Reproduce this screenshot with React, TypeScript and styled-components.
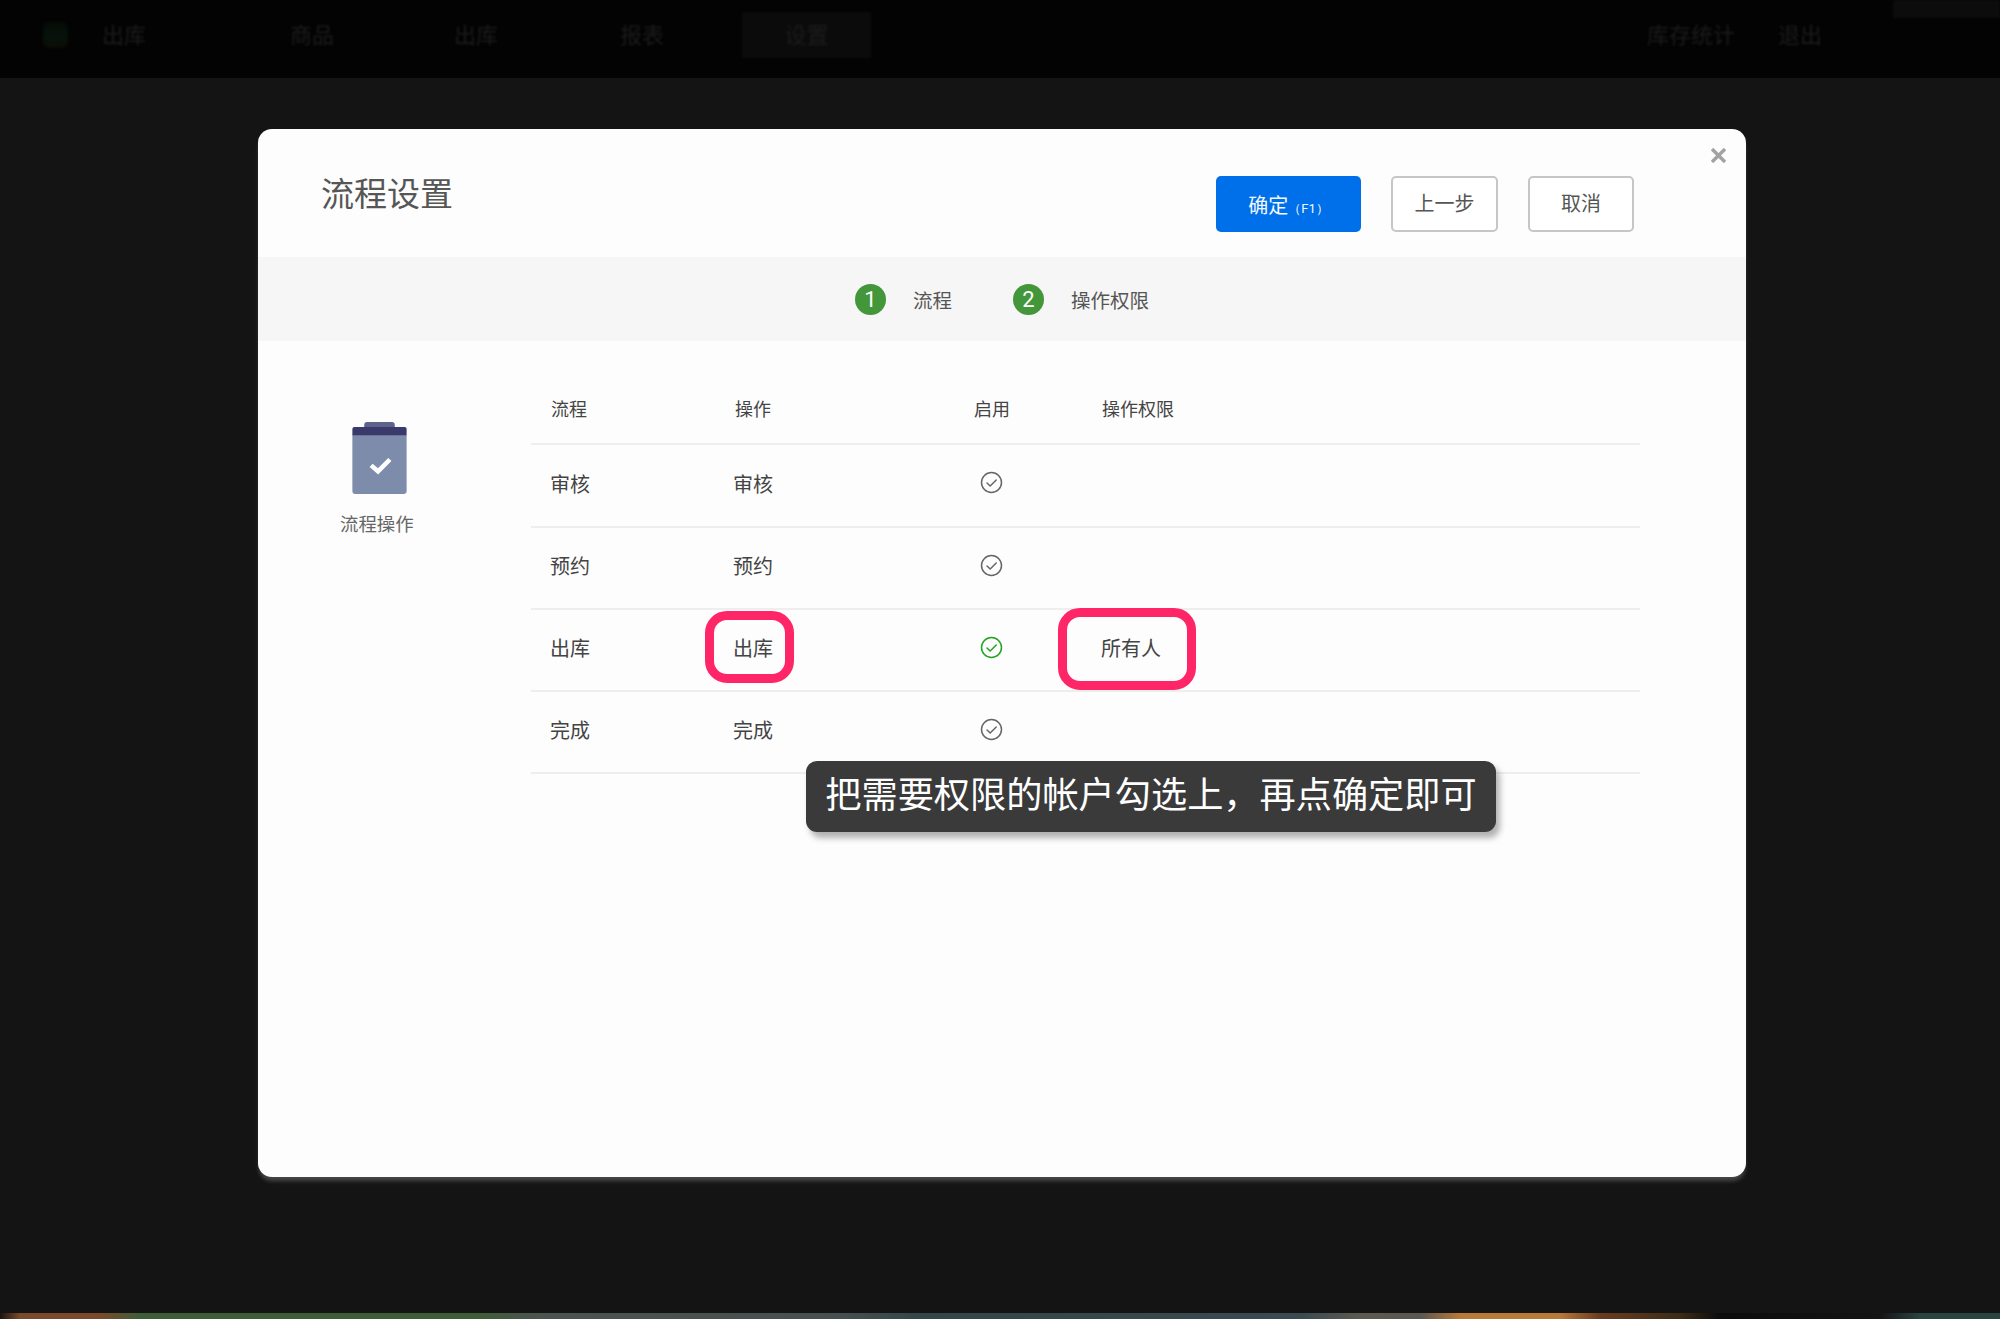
import React from "react";
import styled, { createGlobalStyle } from "styled-components";

const Global = createGlobalStyle`
  html, body { margin: 0; padding: 0; background: #141414; }
  body { font-family: "Noto Sans CJK SC", "Noto Sans", sans-serif; }
`;

const Page = styled.div`
  width: 2000px;
  height: 1319px;
  display: flex;
  flex-direction: column;
  overflow: hidden;
  background: #141414;
`;

const TopBar = styled.header`
  position: relative;
  height: 78px;
  flex: none;
  background: #030303;
  display: flex;
  align-items: center;
  padding-left: 43px;
  color: #1c1c1c;
  font-size: 22px;
`;

const Logo = styled.div`
  width: 25px;
  height: 26px;
  margin-right: 34px;
  margin-top: -9px;
  border-radius: 6px;
  background: linear-gradient(180deg, #040b06, #07130a 60%, #0b0b03);
  filter: blur(1.5px);
`;

const NavItem = styled.span<{ $w: number; $active?: boolean }>`
  width: ${(p) => p.$w}px;
  height: 46px;
  margin-top: -9px;
  padding-bottom: 3px;
  box-sizing: border-box;
  flex: none;
  display: flex;
  align-items: center;
  filter: blur(1px);
  justify-content: ${(p) => (p.$active ? "center" : "flex-start")};
  background: ${(p) => (p.$active ? "#0b0b0b" : "transparent")};
`;

const Spacer = styled.div`
  flex: 1;
`;

const Badge = styled.div`
  position: absolute;
  right: 0;
  top: 0;
  width: 107px;
  height: 18px;
  background: #0c0c0c;
  filter: blur(1px);
`;

const Main = styled.main`
  flex: 1;
  padding: 51px 254px 0 258px;
`;

const Modal = styled.section`
  position: relative;
  height: 1048px;
  border-radius: 14px;
  background: #fdfdfd;
  box-shadow: 0 5px 4px -1px rgba(255, 255, 255, 0.22);
  color: #444;
`;

const Header = styled.div`
  height: 128px;
  display: flex;
  align-items: flex-start;
  padding: 47px 112px 0 63px;
  box-sizing: border-box;
`;

const Title = styled.h1`
  margin: -8px 0 0;
  font-size: 33px;
  line-height: 48px;
  font-weight: 400;
  color: #565656;
`;

const Actions = styled.div`
  margin-left: auto;
  display: flex;
  gap: 30px;
`;

const Button = styled.button<{ $w: number; $primary?: boolean }>`
  width: ${(p) => p.$w}px;
  height: 56px;
  padding: ${(p) => (p.$primary ? "0" : "0 0 3px")};
  box-sizing: border-box;
  border-radius: 5px;
  font-family: inherit;
  font-size: 20px;
  border: ${(p) => (p.$primary ? "none" : "2px solid #c6c6c6")};
  background: ${(p) => (p.$primary ? "#0070ea" : "#ffffff")};
  color: ${(p) => (p.$primary ? "#f4f9ff" : "#555555")};
`;

const Hint = styled.span`
  font-size: 13px;
  font-family: Roboto, sans-serif;
`;

const Close = styled.svg`
  position: absolute;
  right: 20px;
  top: 19px;
  width: 15px;
  height: 15px;
`;

const Steps = styled.div`
  height: 84px;
  background: #f6f6f6;
  display: flex;
  align-items: center;
  justify-content: center;
`;

const StepDot = styled.span`
  width: 31px;
  height: 31px;
  border-radius: 50%;
  background: #43963a;
  color: #fff;
  font-family: Roboto, sans-serif;
  font-size: 22px;
  font-weight: 400;
  display: flex;
  align-items: center;
  justify-content: center;
  margin-right: 27px;
`;

const StepLabel = styled.span<{ $gap?: number }>`
  font-size: 19.5px;
  color: #555;
  margin-right: ${(p) => p.$gap ?? 0}px;
`;

const Body = styled.div`
  display: flex;
  padding: 32px 106px 0 0;
`;

const Side = styled.div`
  width: 273px;
  flex: none;
  display: flex;
  flex-direction: column;
  padding: 49px 0 0 82px;
  box-sizing: border-box;
`;

const SideIcon = styled.svg`
  width: 55px;
  height: 72px;
  margin-left: 12px;
`;

const SideLabel = styled.div`
  margin-top: 16px;
  font-size: 18.4px;
  line-height: 26px;
  color: #666;
`;

const Table = styled.div`
  flex: 1;
`;

const Row = styled.div<{ $head?: boolean }>`
  display: grid;
  grid-template-columns: 184px 237px 80px 1fr;
  align-items: center;
  box-sizing: border-box;
  height: ${(p) => (p.$head ? 72 : 82)}px;
  padding-bottom: ${(p) => (p.$head ? 1 : 4)}px;
  border-bottom: 2px solid #eeeeee;
  font-size: ${(p) => (p.$head ? 18 : 20)}px;
  color: #444;
  &:nth-child(2) {
    height: 83px;
  }
`;

const Cell = styled.div<{ $center?: boolean; $indent?: number }>`
  padding-left: ${(p) => p.$indent ?? 19}px;
  text-align: ${(p) => (p.$center ? "center" : "left")};
  line-height: 28px;
  display: ${(p) => (p.$center ? "flex" : "block")};
  justify-content: center;
`;

const HeadCell = styled(Cell)`
  padding-left: ${(p) => p.$indent ?? 20}px;
`;

const CheckIcon = styled.svg<{ $on?: boolean }>`
  width: 23px;
  height: 23px;
  margin-top: -2px;
  margin-left: -1px;
  color: ${(p) => (p.$on ? "#1fa51f" : "#666666")};
`;

const Highlight = styled.div<{ $l: number; $t: number; $w: number; $h: number }>`
  position: absolute;
  left: ${(p) => p.$l}px;
  top: ${(p) => p.$t}px;
  width: ${(p) => p.$w}px;
  height: ${(p) => p.$h}px;
  box-sizing: border-box;
  border: 9px solid #ff2667;
  border-radius: 22px;
`;

const Caption = styled.div`
  position: absolute;
  left: 548px;
  top: 632px;
  width: 690px;
  height: 71px;
  padding-bottom: 10px;
  box-sizing: border-box;
  border-radius: 11px;
  background: #3a3a3a;
  box-shadow: 4px 6px 6px rgba(0, 0, 0, 0.3);
  color: #fff;
  font-size: 36.2px;
  display: flex;
  align-items: center;
  justify-content: center;
  white-space: nowrap;
`;

const Strip = styled.div`
  height: 6px;
  flex: none;
  background: linear-gradient(
    90deg,
    #1a1410 0,
    #7a4a2a 1%,
    #7a4a2a 5%,
    #3f5c38 7%,
    #3f5c38 24%,
    #4c5450 27%,
    #46504f 42%,
    #34464a 46%,
    #3a4a50 65%,
    #5c5a50 68%,
    #5a5650 71%,
    #b87838 73%,
    #b87838 78%,
    #6a3c20 80%,
    #3c2c16 84%,
    #0c0c0c 86%,
    #141414 94%,
    #2a4440 96%,
    #2a4440 100%
  );
`;

const Check = ({ on }: { on?: boolean }) => (
  <CheckIcon $on={on} viewBox="0 0 23 23" fill="none" stroke="currentColor">
    <circle cx="11.5" cy="11.5" r="10" strokeWidth="1.5" />
    <path d="M7 12l3.2 3 6-6" strokeWidth="1.5" strokeLinecap="round" strokeLinejoin="round" />
  </CheckIcon>
);

const rows = [
  { name: "审核", on: false },
  { name: "预约", on: false },
  { name: "出库", on: true, who: "所有人" },
  { name: "完成", on: false },
];

export default function App() {
  return (
    <Page>
      <Global />
      <TopBar>
        <Logo />
        <NavItem $w={188}>出库</NavItem>
        <NavItem $w={164}>商品</NavItem>
        <NavItem $w={166}>出库</NavItem>
        <NavItem $w={122}>报表</NavItem>
        <NavItem $w={129} $active>设置</NavItem>
        <Spacer />
        <NavItem $w={131}>库存统计</NavItem>
        <NavItem $w={222}>退出</NavItem>
        <Badge />
      </TopBar>
      <Main>
        <Modal>
          <Header>
            <Title>流程设置</Title>
            <Actions>
              <Button $primary $w={145}>
                确定<Hint>（F1）</Hint>
              </Button>
              <Button $w={107}>上一步</Button>
              <Button $w={106}>取消</Button>
            </Actions>
          </Header>
          <Close viewBox="0 0 15 15" stroke="#a2a2a2" strokeWidth="3.4">
            <path d="M1 1l13 13M14 1L1 14" />
          </Close>
          <Steps>
            <StepDot>1</StepDot>
            <StepLabel $gap={61}>流程</StepLabel>
            <StepDot>2</StepDot>
            <StepLabel>操作权限</StepLabel>
          </Steps>
          <Body>
            <Side>
              <SideIcon viewBox="0 0 55 73">
                <rect x="12" y="0" width="31" height="10" rx="3" fill="#5d6288" />
                <path d="M0 14V7a2 2 0 0 1 2-2h51a2 2 0 0 1 2 2v7z" fill="#393a6b" />
                <path d="M0 14h55v56a3 3 0 0 1-3 3H3a3 3 0 0 1-3-3z" fill="#7e8cab" />
                <path d="M19 44l7 6 12-12" fill="none" stroke="#fff" strokeWidth="4.6" />
              </SideIcon>
              <SideLabel>流程操作</SideLabel>
            </Side>
            <Table>
              <Row $head>
                <HeadCell>流程</HeadCell>
                <HeadCell>操作</HeadCell>
                <HeadCell $indent={0} $center>启用</HeadCell>
                <HeadCell $indent={70}>操作权限</HeadCell>
              </Row>
              {rows.map((r) => (
                <Row key={r.name}>
                  <Cell>{r.name}</Cell>
                  <Cell $indent={18}>{r.name}</Cell>
                  <Cell $indent={0} $center>
                    <Check on={r.on} />
                  </Cell>
                  <Cell $indent={69}>{r.who}</Cell>
                </Row>
              ))}
            </Table>
          </Body>
          <Highlight $l={447} $t={482} $w={89} $h={72} />
          <Highlight $l={800} $t={479} $w={138} $h={82} />
          <Caption>把需要权限的帐户勾选上，再点确定即可</Caption>
        </Modal>
      </Main>
      <Strip />
    </Page>
  );
}
